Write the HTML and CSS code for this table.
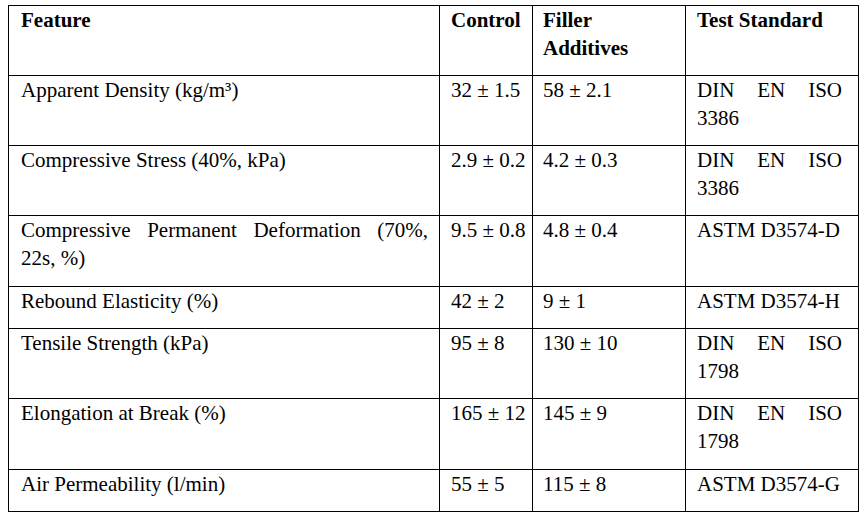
FILE: index.html
```html
<!DOCTYPE html>
<html lang="en">
<head>
<meta charset="utf-8">
<title>Foam properties</title>
<link rel="stylesheet" href="styles.css">
</head>
<body>
<table class="props">
  <colgroup>
    <col class="c-feature">
    <col class="c-control">
    <col class="c-filler">
    <col class="c-std">
  </colgroup>
  <thead>
    <tr>
      <th class="feature">Feature</th>
      <th class="control">Control</th>
      <th class="filler">Filler Additives</th>
      <th class="std">Test Standard</th>
    </tr>
  </thead>
  <tbody>
    <tr>
      <td class="feature">Apparent Density (kg/m³)</td>
      <td class="control">32 ± 1.5</td>
      <td class="filler">58 ± 2.1</td>
      <td class="std">DIN EN ISO 3386</td>
    </tr>
    <tr>
      <td class="feature">Compressive Stress (40%, kPa)</td>
      <td class="control">2.9 ± 0.2</td>
      <td class="filler">4.2 ± 0.3</td>
      <td class="std">DIN EN ISO 3386</td>
    </tr>
    <tr class="tall">
      <td class="feature">Compressive Permanent Deformation (70%, 22s, %)</td>
      <td class="control">9.5 ± 0.8</td>
      <td class="filler">4.8 ± 0.4</td>
      <td class="std">ASTM D3574-D</td>
    </tr>
    <tr>
      <td class="feature">Rebound Elasticity (%)</td>
      <td class="control">42 ± 2</td>
      <td class="filler">9 ± 1</td>
      <td class="std">ASTM D3574-H</td>
    </tr>
    <tr>
      <td class="feature">Tensile Strength (kPa)</td>
      <td class="control">95 ± 8</td>
      <td class="filler">130 ± 10</td>
      <td class="std">DIN EN ISO 1798</td>
    </tr>
    <tr class="tall">
      <td class="feature">Elongation at Break (%)</td>
      <td class="control">165 ± 12</td>
      <td class="filler">145 ± 9</td>
      <td class="std">DIN EN ISO 1798</td>
    </tr>
    <tr>
      <td class="feature">Air Permeability (l/min)</td>
      <td class="control">55 ± 5</td>
      <td class="filler">115 ± 8</td>
      <td class="std">ASTM D3574-G</td>
    </tr>
  </tbody>
</table>
</body>
</html>
```

FILE: styles.css
```css
html, body {
  background: #ffffff;
}

body {
  margin: 5px 0 0 8px;
  font-family: "Liberation Serif", "Times New Roman", serif;
  font-size: 21px;
  line-height: 28px;
  color: #000000;
}

.props {
  border-collapse: collapse;
  table-layout: fixed;
  width: 850px;
}

.c-feature { width: 431px; }
.c-control { width: 93px; }
.c-filler { width: 153px; }
.c-std { width: 173px; }

.props th,
.props td {
  border: 1px solid #000000;
  vertical-align: top;
  text-align: justify;
  padding: 0 0 13px 0;
  font-family: "Liberation Serif", "Times New Roman", serif;
  font-weight: normal;
}

.props th {
  font-weight: bold;
  text-align: left;
}

.props .tall td {
  padding-bottom: 14px;
}

.props .feature {
  padding-left: 12px;
  padding-right: 11px;
}

.props .control {
  padding-left: 11px;
  padding-right: 4px;
}

.props .filler {
  padding-left: 10px;
  padding-right: 8px;
}

.props .std {
  padding-left: 11px;
  padding-right: 16px;
}
```
